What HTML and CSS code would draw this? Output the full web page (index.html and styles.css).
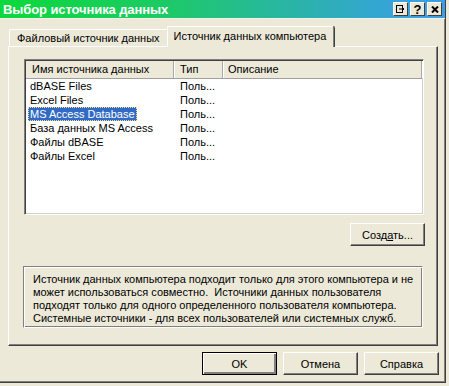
FILE: index.html
```html
<!DOCTYPE html>
<html lang="ru">
<head>
    <meta charset="UTF-8">
    <title>Выбор источника данных</title>
    <link rel="stylesheet" href="styles.css">
</head>
<body>
    <div class="window">
        <div class="titlebar">
            <div class="caption">Выбор источника данных</div>
            <div class="caption-buttons">
                <span class="cbtn">
                    <svg width="9" height="8" viewBox="0 0 9 8"><rect x="0.5" y="0.5" width="6" height="7" fill="none" stroke="#000"/><path d="M3 4h5M6 2l2 2-2 2" fill="none" stroke="#000"/></svg>
                </span>
                <span class="cbtn q">?</span>
                <span class="cbtn">
                    <svg width="8" height="7" viewBox="0 0 8 7"><path d="M1 0.5l6 6M7 0.5l-6 6" fill="none" stroke="#000" stroke-width="2"/></svg>
                </span>
            </div>
        </div>
        <div class="content">
            <div class="tabs">
                <div class="tab">Файловый источник данных</div>
                <div class="tab active">Источник данных компьютера</div>
            </div>
            <div class="panel">
                <div class="listview">
                    <div class="lv-header">
                        <div class="col c1">Имя источника данных</div>
                        <div class="col c2">Тип</div>
                        <div class="col c3">Описание</div>
                    </div>
                    <div class="lv-row"><div class="c1"><span class="name">dBASE Files</span></div><div class="c2">Поль...</div></div>
                    <div class="lv-row"><div class="c1"><span class="name">Excel Files</span></div><div class="c2">Поль...</div></div>
                    <div class="lv-row selected"><div class="c1"><span class="name">MS Access Database</span></div><div class="c2">Поль...</div></div>
                    <div class="lv-row"><div class="c1"><span class="name">База данных MS Access</span></div><div class="c2">Поль...</div></div>
                    <div class="lv-row"><div class="c1"><span class="name">Файлы dBASE</span></div><div class="c2">Поль...</div></div>
                    <div class="lv-row"><div class="c1"><span class="name">Файлы Excel</span></div><div class="c2">Поль...</div></div>
                </div>
                <div class="create-row">
                    <button class="btn">Созд<u>а</u>ть...</button>
                </div>
                <div class="info">
                    Источник данных компьютера подходит только для этого компьютера и не
                    может использоваться совместно.&nbsp; Источники данных пользователя
                    подходят только для одного определенного пользователя компьютера.
                    Системные источники - для всех пользователей или системных служб.
                </div>
            </div>
            <div class="footer">
                <button class="btn default">OK</button>
                <button class="btn">Отмена</button>
                <button class="btn">Справка</button>
            </div>
        </div>
    </div>
</body>
</html>
```

FILE: styles.css
```css
body {
    margin: 0;
    background: #ece9d8;
    font-family: 'Liberation Sans', Arial, sans-serif;
    font-size: 11px;
    color: #000;
    width: 449px;
    height: 386px;
    overflow: hidden;
}
.window {
    width: 446px;
    height: 383px;
    box-sizing: border-box;
    background: #ece9d8;
    border-right: 1px solid #404040;
    border-bottom: 1px solid #404040;
    box-shadow: inset -1px -1px 0 #808080;
}
.titlebar {
    height: 18px;
    display: flex;
    align-items: center;
    justify-content: space-between;
    background: linear-gradient(to right, #0cd83c 0%, #1ccb62 35%, #27b99a 60%, #34a6d2 85%, #3c9ee6 100%);
    border-bottom: 1px solid #f4f2e8;
}
.caption {
    color: #fff;
    font-weight: bold;
    font-size: 13px;
    padding-left: 3px;
    letter-spacing: -0.1px;
}
.caption-buttons {
    display: flex;
    gap: 2px;
    padding-right: 3px;
}
.cbtn {
    width: 15px;
    height: 14px;
    box-sizing: border-box;
    background: #ece9d8;
    border: 1px solid;
    border-color: #fff #404040 #404040 #fff;
    display: flex;
    align-items: center;
    justify-content: center;
    font-weight: bold;
    line-height: 1;
}
.cbtn.q {
    font-size: 13px;
}
.content {
    padding: 7px 7px 0 8px;
}
.tabs {
    display: flex;
    align-items: flex-end;
    height: 20px;
    padding-left: 1px;
}
.tab {
    height: 17px;
    box-sizing: border-box;
    padding: 1px 7px 0 7px;
    border: 1px solid #fff;
    border-bottom: none;
    border-right-color: #808080;
    border-radius: 2px 2px 0 0;
    white-space: nowrap;
    line-height: 15px;
}
.tab.active {
    height: 21px;
    margin-left: -1px;
    margin-bottom: -1px;
    padding: 2px 7px 0 6px;
    background: #ece9d8;
    box-shadow: 1px 0 0 #404040;
    position: relative;
}
.panel {
    width: 430px;
    height: 300px;
    box-sizing: border-box;
    border: 1px solid;
    border-color: #fff #404040 #404040 #fff;
    box-shadow: inset -1px -1px 0 #808080;
    padding: 12px 0 0 15px;
}
.listview {
    width: 400px;
    height: 156px;
    box-sizing: border-box;
    background: #fff;
    border: 1px solid;
    border-color: #808080 #fff #fff #808080;
    box-shadow: inset 1px 1px 0 #404040, inset -1px -1px 0 #d4d0c8;
}
.lv-header {
    display: flex;
    height: 17px;
    background: #ece9d8;
    border-bottom: 1px solid #a0a0a0;
    margin: 1px 1px 0 1px;
}
.lv-header .col {
    line-height: 16px;
    box-sizing: border-box;
    border-right: 1px solid #a8a8a8;
    box-shadow: 1px 0 0 #fff;
}
.c1 {
    width: 148px;
    padding-left: 6px;
}
.c2 {
    width: 49px;
    padding-left: 6px;
}
.c3 {
    width: 199px;
    padding-left: 5px;
}
.lv-row {
    display: flex;
    height: 14px;
    line-height: 14px;
    padding-left: 1px;
}
.lv-row .c1 {
    box-sizing: border-box;
    padding-left: 2px;
}
.lv-row .c2 {
    box-sizing: border-box;
    padding-left: 6px;
}
.lv-row .name {
    padding: 0 2px;
    display: inline-block;
}
.lv-row.selected .name {
    background: #316ac5;
    color: #fff;
    outline: 1px dotted #ffe080;
    outline-offset: -1px;
}
.create-row {
    display: flex;
    justify-content: flex-end;
    width: 401px;
    margin-top: 8px;
}
.btn {
    width: 75px;
    height: 23px;
    box-sizing: border-box;
    font-family: inherit;
    font-size: 11px;
    color: #000;
    background: #ece9d8;
    border: 1px solid;
    border-color: #fff #404040 #404040 #fff;
    box-shadow: inset -1px -1px 0 #808080;
    padding: 0;
}
.btn.default {
    border: 1px solid #000;
    box-shadow: inset 1px 1px 0 #fff, inset -2px -2px 0 #808080;
}
.info {
    width: 400px;
    height: 62px;
    box-sizing: border-box;
    margin-top: 20px;
    margin-left: -1px;
    border: 1px solid;
    border-color: #808080 #fff #fff #808080;
    box-shadow: inset 1px 1px 0 #fff, inset -1px -1px 0 #808080;
    padding: 6px 0 0 9px;
    line-height: 13px;
}
.footer {
    display: flex;
    justify-content: flex-end;
    gap: 6px;
    width: 431px;
    margin-top: 6px;
}
.footer .btn {
    width: 75px;
}
```
